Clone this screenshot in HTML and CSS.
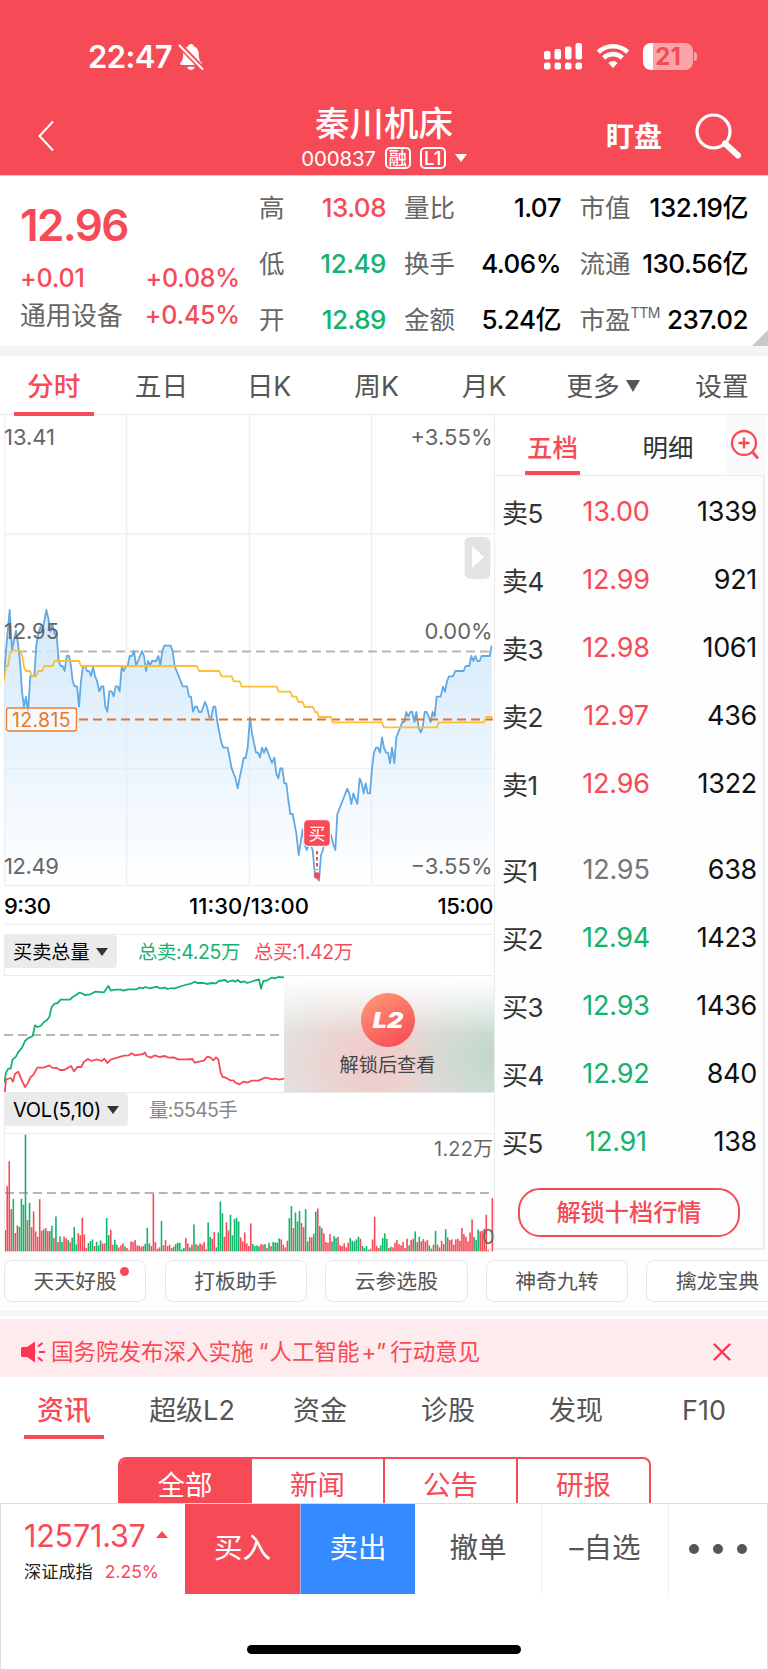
FILE: index.html
```
<!DOCTYPE html>
<html lang="zh-CN">
<head>
  <meta charset="UTF-8">
  <meta name="viewport" content="width=device-width, initial-scale=1.0">
  <title>秦川机床 000837</title>
  <link rel="stylesheet" href="styles.css">
</head>
<body>

  <header>
    <div class="status-bar">
      <div class="status-left">
        <span class="clock">22:47</span>
        <svg width="26" height="28" viewBox="0 0 26 28">
          <path d="M13 1c1.800 0 2.600 1 2.800 2.200 3.400 1.100 5 4 5 7.800 0 5 1 7 2.600 8.600.9 1 .4 2.400-1 2.400H3.600c-1.400 0-1.900-1.400-1-2.400C4.200 18 5.200 16 5.200 11c0-3.800 1.600-6.700 5-7.800C10.400 2 11.200 1 13 1zM9.300 23.700h7.400c-.4 2-1.800 3.300-3.700 3.300s-3.300-1.300-3.700-3.300z" fill="#fff"/>
          <path d="M1 1.500 25 26.500" stroke="#f64b57" stroke-width="5.500"/>
          <path d="M1.500 2.500 24.500 26" stroke="#fff" stroke-width="2" stroke-linecap="round"/>
        </svg>
      </div>
      <div class="status-right">
        <svg width="39" height="27" viewBox="0 0 39 27" fill="#fff">
          <rect x="0" y="8" width="6.500" height="8.500" rx="2"/>
          <rect x="10.500" y="6" width="6.500" height="10.500" rx="2"/>
          <rect x="21" y="3.500" width="6.500" height="13" rx="2"/>
          <rect x="31.500" y="0" width="6.500" height="16.500" rx="2"/>
          <rect x="0" y="19.500" width="6.500" height="7" rx="2"/>
          <rect x="10.500" y="19.500" width="6.500" height="7" rx="2"/>
          <rect x="21" y="19.500" width="6.500" height="7" rx="2"/>
          <rect x="31.500" y="19.500" width="6.500" height="7" rx="2"/>
        </svg>
        <svg class="wifi" width="34" height="26" viewBox="0 0 34 26" fill="none" stroke="#fff" stroke-width="4.600">
          <path d="M2.300 9.200a21 21 0 0 1 29.400 0"/>
          <path d="M7.700 15a13.200 13.200 0 0 1 18.600 0"/>
          <path d="M17 25l-4.600-5a6.500 6.500 0 0 1 9.200 0z" fill="#fff" stroke="none"/>
        </svg>
        <div class="battery"><span>21</span></div>
      </div>
    </div>
    <div class="title-bar">
      <svg class="back" width="16" height="32" viewBox="0 0 16 32" fill="none" stroke="#fff" stroke-width="2">
        <path d="M15 1.500 1.500 16 15 30.500"/>
      </svg>
      <div class="title">
        <h1>秦川机床</h1>
        <div class="code">
          <span class="num">000837</span><i>融</i><i class="l1">L1</i><b class="tri white"></b>
        </div>
      </div>
      <div class="watch">盯盘</div>
      <svg class="search" width="46" height="46" viewBox="0 0 46 46" fill="none" stroke="#fff">
        <circle cx="18.500" cy="18.500" r="16.500" stroke-width="3.200"/>
        <path d="M30 30.500 43 42.500" stroke-width="6" stroke-linecap="round"/>
      </svg>
    </div>
  </header>

  <section class="quote">
    <div class="price-box">
      <div class="price">12.96</div>
      <div class="row change"><span>+0.01</span><span>+0.08%</span></div>
      <div class="row sector"><span>通用设备</span><span>+0.45%</span></div>
    </div>
    <div class="stats">
      <label>高</label><span class="up">13.08</span><label>量比</label><b>1.07</b><label>市值</label><b>132.19亿</b>
      <label>低</label><span class="down">12.49</span><label>换手</label><b>4.06%</b><label>流通</label><b>130.56亿</b>
      <label>开</label><span class="down">12.89</span><label>金额</label><b>5.24亿</b><label>市盈<sup>TTM</sup></label><b>237.02</b>
    </div>
    <div class="corner"></div>
  </section>

  <nav class="period">
    <a class="active">分时</a><a>五日</a><a>日K</a><a>周K</a><a>月K</a><a>更多<b class="tri"></b></a><a>设置</a>
  </nav>

  <div class="market">
    <div class="charts">
      <svg class="chart" width="490" height="510" viewBox="0 0 490 510">
        <defs>
          <linearGradient id="area" x1="0" y1="0" x2="0" y2="1">
            <stop offset="0" stop-color="#d3e9fb"/>
            <stop offset="1" stop-color="#d3e9fb" stop-opacity="0"/>
          </linearGradient>
        </defs>
        <g class="grid">
          <path d="M.5 0V470.500M122.500 0V470.500M245.500 0V470.500M367.500 0V470.500"/>
          <path d="M0 119H490M0 353.500H490M0 470.500H490M0 509.500H490"/>
        </g>
        <path class="mid" d="M0 236.500H490"/>
        <g transform="translate(-4 185) scale(.33333)">
          <path id="fill" fill="url(#area)"/>
          <polyline id="price" class="line blue" points="12,240 18,150 29,30 36,150 42,120 48,92 54,130 60,185 66,275 72,320 78,290 84,337 91,228 103,228 109,135 115,100 121,80 127,95 139,30 145,55 151,95 157,72 163,100 170,108 176,183 182,198 188,198 194,213 200,168 207,168 213,198 218,243 224,259 231,259 237,320 243,243 249,198 255,198 261,213 267,213 273,228 279,200 285,228 291,243 298,274 304,259 310,259 316,320 322,335 328,274 335,274 341,289 347,259 353,259 359,274 365,200 371,213 377,200 383,198 389,168 396,168 402,153 408,196 414,183 426,153 432,168 438,213 444,183 450,196 456,183 468,183 475,168 481,196 487,153 493,137 512,137 518,153 524,198 536,228 548,259 561,259 567,290 573,290 579,335 585,320 591,320 597,336 604,336 615,306 621,320 628,352 634,352 640,320 646,320 652,366 658,397 664,428 670,443 683,443 689,474 695,505 706,533 713,565 719,533 725,505 731,474 737,474 743,443 750,352 756,400 768,458 774,458 780,472 786,443 792,458 798,443 816,489 823,473 829,520 835,535 841,505 847,505 853,550 859,550 865,600 871,642 878,642 889,700 896,765 908,688 914,735 920,750 926,735 932,735 938,750 945,825 957,842 963,765 969,750 975,715 982,680 987,690 993,705 999,730 1006,750 1012,642 1042,566 1048,580 1054,612 1060,580 1072,612 1079,535 1085,550 1091,580 1097,550 1103,580 1110,580 1116,505 1122,458 1128,443 1134,443 1140,458 1146,412 1152,443 1158,458 1164,458 1170,490 1176,443 1183,490 1189,412 1207,366 1213,366 1219,336 1225,350 1231,336 1237,336 1243,366 1249,336 1256,382 1262,397 1268,382 1274,336 1280,336 1286,350 1292,366 1298,336 1304,350 1310,290 1322,290 1329,260 1335,275 1341,244 1347,229 1359,229 1366,213 1391,213 1397,198 1408,198 1414,168 1420,183 1426,168 1432,183 1439,183 1445,168 1469,168 1475,137"/>
        </g>
        <path class="cost" d="M75 304.500H489"/>
        <g transform="translate(-4 185) scale(.33333)">
          <polyline class="line yellow" points="12,244 18,198 24,198 30,160 36,152 60,152 67,170 73,205 79,213 90,213 96,229 108,229 115,213 127,213 133,198 158,198 164,183 237,183 243,198 591,198 597,213 658,213 664,229 695,229 701,244 719,244 725,260 830,260 836,275 871,275 877,290 889,290 895,306 908,306 914,321 939,321 945,336 951,336 957,351 993,351 999,367 1146,367 1152,382 1311,382 1317,367 1452,367 1458,351 1477,351"/>
        </g>
        <rect x="2.500" y="293" width="70" height="23" rx="2.500" fill="#fff" fill-opacity=".6" stroke="#f07d2e" stroke-width="1.300"/>
        <text class="cost-text" x="8" y="312" textLength="58.500">12.815</text>
        <g class="scale">
          <text x="0" y="29.500" textLength="51">13.41</text>
          <text x="406.500" y="29.500" textLength="82">+3.55%</text>
          <text x="0" y="224" textLength="55">12.95</text>
          <text x="420.500" y="224" textLength="68">0.00%</text>
          <text x="0" y="458.500" textLength="55">12.49</text>
          <text x="406.500" y="458.500" textLength="82">−3.55%</text>
        </g>
        <g class="time">
          <text x="0" y="498.500" textLength="47">9:30</text>
          <text x="185" y="498.500" textLength="120">11:30/13:00</text>
          <text x="433.500" y="498.500" textLength="56">15:00</text>
        </g>
        <rect x="460.500" y="122" width="26" height="42" rx="6" fill="#e3e3e3"/>
        <path d="M468 131v22l12-11z" fill="#fff"/>
        <rect x="299.700" y="404.700" width="26.600" height="26.600" rx="4" fill="#f64b57" stroke="#fff"/>
        <text class="mark" x="313" y="424.500" text-anchor="middle">买</text>
        <path d="M313 436v19" stroke="#f64b57" stroke-width="2" stroke-dasharray="3.500 2.500"/>
        <circle cx="313" cy="460.500" r="3.200" fill="#f64b57"/>
      </svg>

      <div class="sub-head first">
        <span class="select">买卖总量<b class="tri"></b></span>
        <span class="sum down">总卖:4.25万</span><span class="sum up">总买:1.42万</span>
      </div>
      <div class="total">
        <svg width="280" height="118" viewBox="0 0 280 118">
          <path class="mid" d="M0 59H280"/>
          <g transform="translate(-4 -55) scale(.33333)">
            <polyline class="line green" points="13,485 18,455 25,443 32,443 38,415 48,407 54,395 66,380 75,360 84,352 98,345 105,313 112,318 122,315 132,303 140,298 148,288 155,258 165,247 172,247 182,236 210,236 218,228 228,222 238,215 245,217 254,222 272,220 285,212 312,214 325,195 333,209 345,206 362,206 370,209 385,205 410,205 418,200 428,202 436,198 450,202 470,197 480,202 495,200 503,204 515,201 522,203 545,195 575,187 584,182 592,186 612,186 620,189 636,186 648,187 656,180 675,177 683,183 697,178 706,182 713,177 722,184 732,181 742,186 760,180 777,175 783,203 790,180 802,178 815,170 825,172 835,168 852,169"/>
            <polyline class="line red" points="14,517 18,475 32,471 39,482 45,458 55,452 64,475 75,498 84,485 92,468 100,462 112,440 132,440 148,433 156,440 170,441 180,447 192,447 205,440 213,435 222,451 232,438 244,438 252,422 264,414 275,420 290,415 305,420 313,413 322,426 333,415 352,410 372,404 386,403 395,397 405,403 430,399 435,394 440,405 452,410 465,403 478,408 495,405 505,410 520,409 535,415 560,415 577,414 584,425 612,419 622,407 632,410 640,418 648,409 655,415 662,455 668,468 678,470 690,478 700,478 706,485 718,490 730,482 742,485 755,479 775,479 795,470 808,472 815,475 825,473 838,476 852,473"/>
          </g>
        </svg>
        <div class="locked">
          <div class="l2"><span>L2</span></div>
          <p>解锁后查看</p>
        </div>
      </div>

      <div class="sub-head">
        <span class="select vol-select">VOL(5,10)<b class="tri"></b></span>
        <span class="amount">量:5545手</span>
      </div>
      <svg class="volume" width="490" height="118" viewBox="0 0 490 118">
        <path class="mid" d="M0 59H490"/>
        <g id="bars"></g>
        <text x="430" y="22" textLength="59">1.22万</text>
        <text x="478" y="110">0</text>
      </svg>
    </div>

    <aside>
      <div class="book-tabs">
        <a class="active">五档</a><a>明细</a>
        <span class="zoom">
          <svg width="30" height="32" viewBox="0 0 30 32" fill="none" stroke="#f64b57" stroke-width="2.300">
            <circle cx="14" cy="14" r="12"/>
            <path d="M22.500 23 28 29.500" stroke-width="2.800"/>
            <path d="M8.500 14h11M14 8.500v11"/>
          </svg>
        </span>
      </div>
      <ul class="book">
        <li><span>卖5</span><em class="up">13.00</em><b>1339</b></li>
        <li><span>卖4</span><em class="up">12.99</em><b>921</b></li>
        <li><span>卖3</span><em class="up">12.98</em><b>1061</b></li>
        <li><span>卖2</span><em class="up">12.97</em><b>436</b></li>
        <li><span>卖1</span><em class="up">12.96</em><b>1322</b></li>
      </ul>
      <ul class="book buy">
        <li><span>买1</span><em>12.95</em><b>638</b></li>
        <li><span>买2</span><em class="down">12.94</em><b>1423</b></li>
        <li><span>买3</span><em class="down">12.93</em><b>1436</b></li>
        <li><span>买4</span><em class="down">12.92</em><b>840</b></li>
        <li><span>买5</span><em class="down">12.91</em><b>138</b></li>
      </ul>
      <div class="unlock">解锁十档行情</div>
    </aside>
  </div>

  <div class="chips">
    <span class="new">天天好股</span><span>打板助手</span><span>云参选股</span><span>神奇九转</span><span>擒龙宝典</span>
  </div>

  <div class="notice">
    <svg width="25" height="22" viewBox="0 0 25 22" fill="#ff3352">
      <path d="M1.500 6H6l8-5.500v21L6 16H1.500Q0 16 0 14.500v-7Q0 6 1.500 6z"/>
      <path d="M17 5.500 21.500 2M18 11h6M17 16.500l4.500 3.500" stroke="#ff3352" stroke-width="2.200" fill="none"/>
    </svg>
    <p>国务院发布深入实施<q>“</q>人工智能<i>+</i><q>”</q>行动意见</p>
    <svg class="close" width="18" height="18" viewBox="0 0 18 18" stroke="#ff3352" stroke-width="2.400" stroke-linecap="round">
      <path d="M1.500 1.500l15 15M16.500 1.500l-15 15"/>
    </svg>
  </div>

  <nav class="news-tabs">
    <a class="active">资讯</a><a>超级L2</a><a>资金</a><a>诊股</a><a>发现</a><a>F10</a>
  </nav>
  <div class="segment">
    <a class="active">全部</a><a>新闻</a><a>公告</a><a>研报</a>
  </div>

  <footer>
    <div class="actions">
      <div class="index">
        <p class="point">12571.37<b class="tri"></b></p>
        <p class="name">深证成指<span>2.25%</span></p>
      </div>
      <a class="buy-btn">买入</a>
      <a class="sell-btn">卖出</a>
      <a class="cancel">撤单</a>
      <a class="fav">–自选</a>
      <a class="more"><i></i><i></i><i></i></a>
    </div>
    <div class="home"></div>
  </footer>

  <script src="script.js"></script>
</body>
</html>
```

FILE: styles.css
```
* { box-sizing: border-box; margin: 0; padding: 0; }
body {
  width: 768px;
  height: 1669px;
  overflow: hidden;
  background: #fff;
  color: #555;
  font-family: Inter, "Noto Sans CJK SC", sans-serif;
}
svg { display: block; flex: none; }
i, em { font-style: normal; }
a, span, label, b, p { white-space: nowrap; }
.up { color: #f64b57; }
.down { color: #14b36d; }
.tri {
  display: inline-block;
  border: 6px solid transparent;
  border-top: 8px solid #333;
  border-bottom: 0;
}
.tri.white { border-top-color: #fff; }

/* header */
header {
  height: 176px;
  background: #f64b57;
  border-bottom: 1px solid #fbc0c4;
  color: #fff;
}
.status-bar {
  height: 112px;
  padding: 0 75px 0 88px;
  display: flex;
  justify-content: space-between;
  align-items: center;
}
.status-left, .status-right { display: flex; align-items: center; }
.status-left { padding-top: 2px; }
.clock {
  width: 90px;
  font-size: 31px;
  font-weight: 600;
  line-height: 36px;
  letter-spacing: -0.6px;
}
.wifi { margin: 0 13px 0 13px; }
.battery {
  position: relative;
  width: 50px;
  height: 27px;
  border-radius: 8px;
  background: linear-gradient(90deg, #fff 10px, #faa4aa 10px);
  color: #f64b57;
  font-size: 24px;
  font-weight: 700;
  line-height: 27px;
  text-align: center;
}
.battery::after {
  content: "";
  position: absolute;
  right: -4px;
  top: 9px;
  width: 3px;
  height: 9px;
  border-radius: 0 3px 3px 0;
  background: #faa4aa;
}
.title-bar {
  height: 63px;
  padding-left: 38px;
  display: grid;
  grid-template-columns: 188px 316px 153px 46px;
}
.back { margin-top: 8px; }
.title { text-align: center; }
.title h1 {
  font-size: 34.5px;
  font-weight: 500;
  line-height: 36px;
  margin-top: -6px;
}
.code {
  display: flex;
  align-items: center;
  justify-content: center;
  height: 22px;
  margin-top: 5px;
}
.code .num { font-size: 20.5px; letter-spacing: -0.2px; }
.code i {
  width: 26px;
  height: 22px;
  margin-left: 9px;
  border: 2px solid #fff;
  border-radius: 5px;
  font-size: 18.5px;
  font-weight: 500;
  line-height: 18px;
}
.code .tri { margin-left: 9px; }
.watch {
  padding-left: 64px;
  font-size: 28px;
  font-weight: 700;
  line-height: 50px;
}
.search { margin-top: 1px; }

/* quote */
.quote {
  position: relative;
  height: 180px;
  border-bottom: 10px solid #f5f5f5;
  display: flex;
}
.price-box { width: 240px; padding-left: 20px; color: #f64b57; }
.price {
  height: 75px;
  padding-top: 25px;
  font-size: 44px;
  font-weight: 600;
  line-height: 48px;
  letter-spacing: -1.6px;
}
.row {
  display: flex;
  justify-content: space-between;
  height: 37px;
  font-size: 25px;
  font-weight: 500;
  line-height: 37px;
  letter-spacing: -0.2px;
}
.change { margin-top: 9px; }
.sector span:first-child { color: #666; font-size: 25.7px; font-weight: 400; letter-spacing: 0; }
.stats {
  width: 489px;
  margin-left: 19px;
  display: grid;
  grid-template-columns: 57px 70px 70px 105px 69px 118px;
  grid-template-rows: 56px 56px 56px;
  padding-top: 4px;
  font-size: 26px;
  line-height: 56px;
}
.stats label { color: #666; font-size: 25.5px; }
.stats span, .stats b {
  font-weight: 500;
  text-align: right;
  letter-spacing: -0.5px;
}
.stats label:nth-child(6n+3) { padding-left: 18px; }
.stats label:nth-child(6n+5) { padding-left: 18.5px; }
.stats b { color: #000; }
.stats sup { font-size: 14px; letter-spacing: -0.4px; line-height: 0; vertical-align: 11px; }
.corner {
  position: absolute;
  right: 0;
  bottom: 0;
  border-left: 16px solid transparent;
  border-bottom: 16px solid #c8c8c8;
}

/* period tabs */
.period {
  height: 59px;
  border-bottom: 1px solid #ececec;
  display: grid;
  grid-template-columns: repeat(5, 107.6px) 130px 1fr;
  text-align: center;
  font-size: 26.7px;
  line-height: 60px;
}
.period a:last-child { padding-left: 8px; }
.period .tri {
  margin-left: 6px;
  border-width: 12px 7.5px 0;
  vertical-align: 4px;
  border-top-color: #555;
}
.active { color: #f64b57; font-weight: 500; position: relative; }
.active::after {
  content: "";
  position: absolute;
  left: 50%;
  bottom: 0;
  width: 80px;
  height: 4px;
  margin-left: -40px;
  background: #f64b57;
}

/* charts */
.market { height: 835px; display: flex; padding-left: 4px; }
.charts { width: 490px; }
.grid { stroke: #f0f0f0; stroke-width: 1.5; }
.mid { stroke: #b5b5b5; stroke-width: 1.9; stroke-dasharray: 9 5; }
.line { fill: none; stroke-width: 5.4; stroke-linejoin: round; }
.blue { stroke: #61a9e4; }
.yellow { stroke: #fbbf37; }
.green { stroke: #14b36d; }
.red { stroke: #f64b57; }
.cost { stroke: #e8741f; stroke-width: 2; stroke-dasharray: 9 5; }
.cost-text { fill: #ee7621; font-size: 19.5px; }
.scale { fill: #666; font-size: 22px; }
.time { fill: #000; font-size: 22px; font-weight: 500; }
.mark { fill: #fff; font-size: 17px; }
.sub-head {
  height: 42px;
  border: 1px solid #ececec;
  border-width: 1px 0 1px 1px;
  display: flex;
  font-size: 20px;
  line-height: 34px;
}
.sub-head.first { margin-top: 9px; }
.select {
  width: 113px;
  height: 33px;
  margin-left: -1px;
  padding-left: 9px;
  border-radius: 0 4px 4px 0;
  background: #ebebeb;
  color: #000;
  font-size: 19.2px;
}
.vol-select { width: 124px; font-size: 20px; letter-spacing: -0.3px; }
.select .tri { margin-left: 6px; vertical-align: 3px; }
.sum { margin-left: 21px; font-size: 19.4px; letter-spacing: -0.35px; }
.sum.up { margin-left: 14px; }
.amount { margin-left: 21px; color: #888; font-size: 19.4px; letter-spacing: -0.6px; }
.total { height: 116px; display: flex; overflow: hidden; }
.locked {
  width: 210px;
  padding: 17px 3px 0 0;
  background:
    linear-gradient(#fff, rgba(255, 255, 255, 0) 50%),
    radial-gradient(ellipse 90px 90px at 100% 70%, #c0d6c9, rgba(192, 214, 201, 0)),
    radial-gradient(ellipse 115px 110px at 42% 75%, #efcccc 15%, rgba(239, 204, 204, 0)),
    #e0e8e3;
  text-align: center;
}
.l2 {
  width: 54px;
  height: 54px;
  margin: 0 auto;
  border-radius: 50%;
  background: linear-gradient(150deg, #ff9c7b, #f7454f);
  color: #fff;
  font-size: 21px;
  font-weight: 900;
  font-style: italic;
  line-height: 56px;
}
.l2 span { display: block; transform: scaleX(1.2); }
.locked p { margin-top: 4px; color: #444; font-size: 19.2px; line-height: 28px; }
.volume { border-left: 1px solid #ececec; }
.volume text { fill: #666; font-size: 20px; }

/* order book */
aside {
  width: 271px;
  border: 1px solid #ececec;
  border-width: 0 2px 2px 1px;
  background: #fdfdfd;
}
.book-tabs {
  height: 61px;
  border-bottom: 1px solid #ececec;
  display: grid;
  grid-template-columns: 115px 116px 39px;
  background: #fff;
  text-align: center;
  font-size: 25.5px;
  line-height: 65px;
}
.book-tabs a { color: #333; height: 60px; }
.book-tabs .active { color: #f64b57; }
.book-tabs .active::after { width: 55px; margin-left: -28px; }
.book-tabs .zoom { padding-top: 14px; padding-left: 4px; background: #fafafa; }
.book { list-style: none; padding-top: 2px; }
.book li {
  height: 67.8px;
  padding: 0 6px 0 7px;
  display: grid;
  grid-template-columns: 68px 92px 1fr;
  align-items: center;
  font-size: 27px;
}
.book span { color: #333; font-size: 26px; letter-spacing: -0.4px; }
.book em { text-align: center; letter-spacing: -0.2px; }
.book b { color: #111; font-weight: 400; text-align: right; letter-spacing: -0.3px; }
.book em:not([class]) { color: #777; }
.buy { padding-top: 19px; }
.unlock {
  width: 222px;
  height: 49px;
  margin: 13px 0 0 23px;
  border: 2px solid #f64b57;
  border-radius: 22px;
  color: #f64b57;
  font-size: 24.2px;
  font-weight: 500;
  line-height: 46px;
  text-align: center;
}

/* shortcut chips */
.chips {
  height: 66px;
  padding: 10px 0 0 4px;
  border-bottom: 5px solid #f5f5f5;
  background: #fdfdfd;
  display: flex;
  gap: 18.2px;
  overflow: hidden;
}
.chips span {
  position: relative;
  flex: none;
  width: 142.4px;
  height: 42px;
  border: 1px solid #e6e6e6;
  border-radius: 8px;
  background: #fff;
  font-size: 20.8px;
  line-height: 41px;
  text-align: center;
}
.chips .new::after {
  content: "";
  position: absolute;
  left: 115px;
  top: 6px;
  width: 9px;
  height: 9px;
  border-radius: 50%;
  background: #f64b57;
}

.notice {
  height: 58px;
  margin-top: 3px;
  padding: 8px 37px 0 21px;
  background: #feebed;
  color: #f64b57;
  display: flex;
  align-items: center;
}
.notice p { margin-left: 5px; font-size: 22.5px; line-height: 34px; }
.notice q { quotes: none; padding: 0 1px 0 5px; }
.notice i { padding: 0 0 0 2px; }
.notice i + q { padding: 0 4px 0 0; }
.close { margin-left: auto; }

/* news */
.news-tabs {
  height: 62px;
  display: grid;
  grid-template-columns: repeat(6, 1fr);
  text-align: center;
  font-size: 27px;
  line-height: 68px;
}
.news-tabs a { height: 62px; }
.segment {
  width: 533px;
  height: 46px;
  margin: 18px 0 0 118px;
  border: 2px solid #f64b57;
  border-bottom: 0;
  border-radius: 8px 8px 0 0;
  display: grid;
  grid-template-columns: 130px 133px 133px 1fr;
  overflow: hidden;
  color: #f64b57;
  font-size: 27.5px;
  line-height: 53px;
  text-align: center;
}
.segment a { border-left: 2px solid #f64b57; }
.segment .active { background: #f64b57; color: #fff; font-weight: 400; border-left: 0; }
.segment .active::after { display: none; }

/* bottom bar */
footer { height: 166px; border: 1px solid #dcdcdc; border-bottom: 0; background: #fff; }
.actions {
  height: 90px;
  display: grid;
  grid-template-columns: 184px 115px 115px 127px 127px 98px;
  font-size: 28.5px;
  line-height: 88px;
  text-align: center;
}
.index { padding: 13px 0 0 23px; text-align: left; color: #f64b57; }
.point { font-size: 30.5px; line-height: 38px; letter-spacing: -0.2px; }
.point .tri {
  margin-left: 10px;
  border-width: 0 6px 7px;
  border-style: solid;
  border-color: transparent transparent #f64b57;
  vertical-align: 9px;
}
.name { color: #222; font-size: 17.2px; line-height: 34px; }
.name span { margin-left: 12px; color: #f64b57; font-size: 17.5px; }
.buy-btn { background: #f64b57; color: #fff; }
.sell-btn { background: #348aff; color: #fff; border-left: 1px solid #a9b4ee; }
.cancel, .fav { border-right: 1px solid #ececec; }
.more { display: flex; align-items: center; justify-content: center; gap: 14px; }
.more i { width: 10px; height: 10px; border-radius: 50%; background: #555; }
.home {
  width: 274px;
  height: 9px;
  margin: 51px auto 0;
  border-radius: 5px;
  background: #000;
}
```

FILE: script.js
```
// area under the price line
const pts = document.getElementById("price").getAttribute("points");
document.getElementById("fill").setAttribute("d", "M12,857 L" + pts + " L1475,857 Z");

// one bar per minute: colour + height
const volumes = `g64 r196 r271 r127 g157 r55 r78 g74 g158 g140 g351 r94 g146 r73 r120 r60 r44 r157 r62 g66
r70 r61 g61 g77 r40 g105 r28 g45 g28 r45 r40 g34 r27 g41 g73 g21 r55 r49 r101 r51
r10 g25 g31 g36 r16 g29 g18 g33 r24 r24 g100 g49 r65 r20 g35 g20 r12 r18 r24 g15
r10 r4 r30 r28 r34 r18 r17 r14 r16 g23 g71 g24 r16 r174 r28 r8 r12 g91 r18 r34
r16 r20 r10 g14 g22 g26 g26 g6 g10 r40 r24 g12 r20 g81 r22 g18 r24 r20 r28 r6
g87 g44 r38 r58 g12 g57 g150 g115 r44 r87 r63 g110 g48 g97 g101 g90 r42 r30 r57 r24
r16 r84 g22 g16 g18 g15 r22 r20 g22 r10 g26 r16 g28 g27 g26 g39 r36 r20 r12 r32
g100 g136 r70 g117 g90 g122 r85 r73 g127 g30 r43 r42 g53 g120 r129 g76 r70 r54 r28 r26
r52 g30 g46 g40 r44 r18 r16 r24 r12 r26 g40 g32 g30 g36 g44 r38 g16 g10 g16 g5
r8 r36 r104 r16 r10 g18 g40 g54 g38 r10 g14 r12 r26 r34 r22 r18 r28 r10 r38 g18
r34 r38 g60 r28 g44 r30 r37 r30 r34 g18 g8 r20 g62 r20 r12 r32 r22 g67 r42 r34
r36 r20 r36 r38 r32 r70 r52 r44 r30 r57 r96 g43 g34 g66 r60 r62 r68 r110 r4 r0 r160`;

let bars = "";
volumes.split(/\s+/).forEach((v, i) => {
  const h = v.slice(1) / 3;
  const color = v[0] === "r" ? "#f64b57" : "#14b36d";
  bars += `<rect x="${(i * 2.034 - 0.6).toFixed(2)}" y="${(117.5 - h).toFixed(2)}" width="1.6" height="${h.toFixed(2)}" fill="${color}"/>`;
});
document.getElementById("bars").innerHTML = bars;
```
